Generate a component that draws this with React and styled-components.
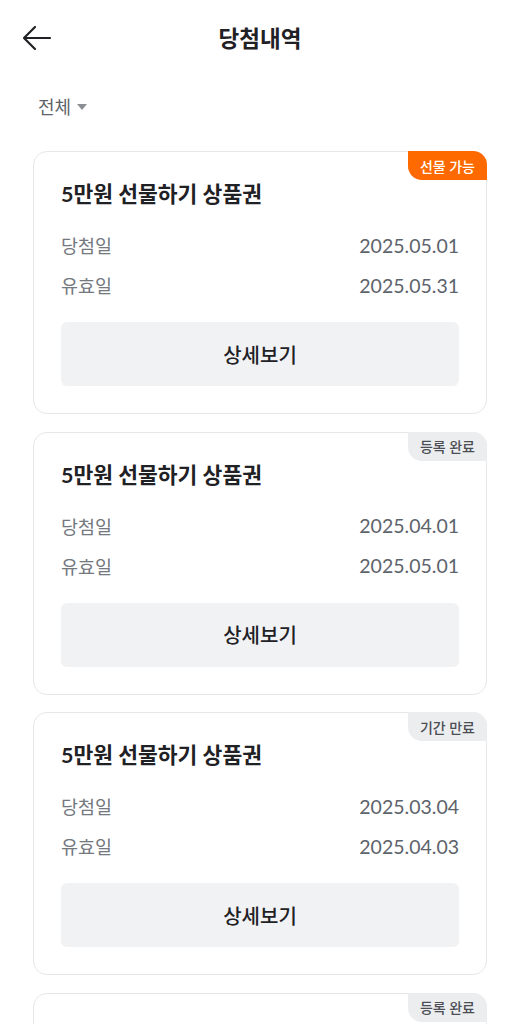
import React from "react";
import styled, { createGlobalStyle } from "styled-components";

const GlobalStyle = createGlobalStyle`
  body {
    margin: 0;
    background: #ffffff;
    font-family: "Lato", "Noto Sans CJK KR", sans-serif;
    color: #1f2125;
  }
`;

const prizes = [
  { id: 1, title: "5만원 선물하기 상품권", won: "2025.05.01", until: "2025.05.31", status: "선물 가능", tone: "orange" },
  { id: 2, title: "5만원 선물하기 상품권", won: "2025.04.01", until: "2025.05.01", status: "등록 완료", tone: "gray" },
  { id: 3, title: "5만원 선물하기 상품권", won: "2025.03.04", until: "2025.04.03", status: "기간 만료", tone: "gray" },
  { id: 4, title: "5만원 선물하기 상품권", won: "2025.02.01", until: "2025.03.01", status: "등록 완료", tone: "gray" },
];

export default function App() {
  return (
    <Page>
      <GlobalStyle />
      <Header>
        <BackButton aria-label="뒤로">
          <svg width="30" height="26" viewBox="0 0 30 26" fill="none">
            <path d="M28 13H2.5M13 2L2 13l11 11" stroke="#1f2125" strokeWidth="2.2" strokeLinecap="round" strokeLinejoin="round" />
          </svg>
        </BackButton>
        <Title>당첨내역</Title>
      </Header>

      <Filter>
        전체
        <Caret />
      </Filter>

      <List>
        {prizes.map((p) => (
          <Card key={p.id}>
            <Badge $tone={p.tone}>{p.status}</Badge>
            <CardTitle>{p.title}</CardTitle>
            <InfoRow>
              <Label>당첨일</Label>
              <Value>{p.won}</Value>
            </InfoRow>
            <InfoRow>
              <Label>유효일</Label>
              <Value>{p.until}</Value>
            </InfoRow>
            <DetailButton>상세보기</DetailButton>
          </Card>
        ))}
      </List>
    </Page>
  );
}

const Page = styled.div`
  width: 520px;
  min-height: 1024px;
  background: #ffffff;
`;

const Header = styled.header`
  position: relative;
  height: 76px;
  display: flex;
  align-items: center;
  justify-content: center;
`;

const BackButton = styled.button`
  position: absolute;
  left: 22px;
  top: 25px;
  padding: 0;
  border: 0;
  background: none;
  display: flex;
`;

const Title = styled.h1`
  margin: 0 0 3px;
  font-size: 22.5px;
  font-weight: 600;
  color: #1f2125;
`;

const Filter = styled.div`
  display: flex;
  align-items: center;
  gap: 6px;
  padding: 17px 0 0 38px;
  height: 26px;
  font-size: 18px;
  color: #5f6368;
`;

const Caret = styled.span`
  width: 0;
  height: 0;
  border-left: 5.5px solid transparent;
  border-right: 5.5px solid transparent;
  border-top: 6px solid #8b8f95;
  margin-top: 2px;
`;

const List = styled.div`
  display: flex;
  flex-direction: column;
  gap: 17.5px;
  padding: 32px 33px 40px;
`;

const Card = styled.div`
  position: relative;
  border: 1px solid #e6e7e9;
  border-radius: 14px;
  padding: 27px 27px 27px;
  display: flex;
  flex-direction: column;
`;

const Badge = styled.span`
  position: absolute;
  top: -1px;
  right: -1px;
  height: 29px;
  padding: 0 12px;
  display: flex;
  align-items: center;
  font-size: 14px;
  font-weight: 500;
  border-radius: 0 14px 0 14px;
  background: ${(p) => (p.$tone === "orange" ? "#ff6a00" : "#ecedef")};
  color: ${(p) => (p.$tone === "orange" ? "#ffffff" : "#4b4f55")};
`;

const CardTitle = styled.h2`
  margin: 0 0 24px;
  font-size: 21.5px;
  line-height: 30px;
  font-weight: 700;
  color: #1f2125;
`;

const InfoRow = styled.div`
  display: flex;
  justify-content: space-between;
  align-items: center;
  height: 24px;
  margin-bottom: 16px;
  font-size: 18.5px;

  & + & {
    margin-bottom: 25px;
  }
`;

const Label = styled.span`
  color: #747980;
`;

const Value = styled.span`
  color: #5d636b;
  font-size: 19.5px;
`;

const DetailButton = styled.button`
  height: 64px;
  border: 0;
  border-radius: 6px;
  background: #f1f2f4;
  font-family: inherit;
  font-size: 20px;
  font-weight: 500;
  color: #1f2125;
`;
